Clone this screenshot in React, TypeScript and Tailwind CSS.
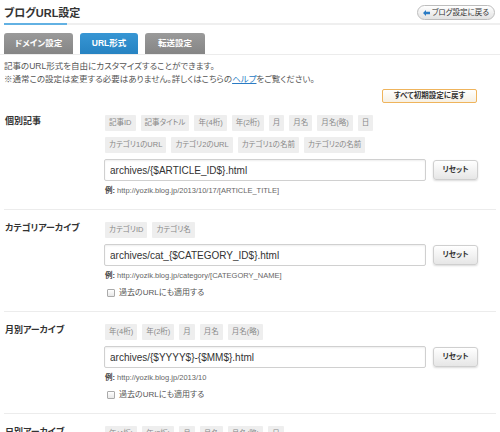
import React from "react"

const sections = [
  {
    label: "個別記事",
    rows: [
      ["記事ID", "記事タイトル", "年(4桁)", "年(2桁)", "月", "月名", "月名(略)", "日"],
      ["カテゴリ1のURL", "カテゴリ2のURL", "カテゴリ1の名前", "カテゴリ2の名前"],
    ],
    value: "archives/{$ARTICLE_ID$}.html",
    example: "http://yozik.blog.jp/2013/10/17/[ARTICLE_TITLE]",
    past: false,
  },
  {
    label: "カテゴリアーカイブ",
    rows: [["カテゴリID", "カテゴリ名"]],
    value: "archives/cat_{$CATEGORY_ID$}.html",
    example: "http://yozik.blog.jp/category/[CATEGORY_NAME]",
    past: true,
  },
  {
    label: "月別アーカイブ",
    rows: [["年(4桁)", "年(2桁)", "月", "月名", "月名(略)"]],
    value: "archives/{$YYYY$}-{$MM$}.html",
    example: "http://yozik.blog.jp/2013/10",
    past: true,
  },
  {
    label: "日別アーカイブ",
    rows: [["年(4桁)", "年(2桁)", "月", "月名", "月名(略)", "日"]],
    value: "archives/{$YYYY$}-{$MM$}-{$DD$}.html",
    example: "http://yozik.blog.jp/2013/10/17",
    past: true,
  },
]

function Section({ s }: { s: (typeof sections)[number] }) {
  return (
    <div className="flex pt-[12px] pb-[12px] border-b border-[#ececec]">
      <div className="w-[100px] shrink-0 pl-[1px] text-[9px] leading-[12px] font-bold text-[#333]">
        {s.label}
      </div>
      <div className="flex flex-col">
        <div className="flex flex-col gap-y-[6px]">
          {s.rows.map((row, i) => (
            <div key={i} className="flex gap-x-[5px] ml-[1px]">
              {row.map((c) => (
                <span
                  key={c}
                  className="h-[16px] px-[4px] flex items-center bg-[#eeeeee] rounded-[1px] text-[7.5px] text-[#888]"
                >
                  {c}
                </span>
              ))}
            </div>
          ))}
        </div>
        <div className="flex items-center mt-[6px]">
          <input
            readOnly
            defaultValue={s.value}
            className="w-[322px] h-[22px] border border-[#d0d0d0] rounded-[2px] px-[5px] text-[10px] text-[#333] bg-white shadow-[inset_0_1px_2px_rgba(0,0,0,0.07)] outline-none"
          />
          <button className="ml-[7px] w-[45px] h-[20px] border border-[#cfcfcf] rounded-[3px] bg-gradient-to-b from-white to-[#e6e6e6] shadow-[0_1px_2px_rgba(0,0,0,0.15)] text-[7.5px] font-bold text-[#333]">
            リセット
          </button>
        </div>
        <div className="mt-[4px] leading-[12px] text-[7.5px] text-[#666] ml-[1px]">
          <span className="font-bold text-[#444]">例:</span> {s.example}
        </div>
        {s.past && (
          <div className="mt-[5px] h-[12px] flex items-center ml-[3px] text-[8px] text-[#555]">
            <span className="w-[8px] h-[8px] border border-[#aaa] bg-gradient-to-b from-white to-[#e8e8e8] rounded-[1px]" />
            <span className="ml-[4px]">過去のURLにも適用する</span>
          </div>
        )}
      </div>
    </div>
  )
}

export default function App() {
  return (
    <div className="w-[500px] h-[432px] overflow-hidden bg-white text-[#333] font-['Liberation_Sans','Noto_Sans_CJK_JP',sans-serif] [font-feature-settings:'palt']">
      <div className="flex justify-between h-[23px] pl-[4px] pr-[5px]">
        <h1 className="pt-[5px] text-[11px] leading-[16px] font-bold text-[#333]">ブログURL設定</h1>
        <button className="mt-[5px] h-[15px] px-[5px] flex items-center gap-[2px] rounded-full border border-[#bdbdbd] bg-gradient-to-b from-white to-[#e2e2e2] text-[7.5px] text-[#333]">
          <svg width="7" height="6" viewBox="0 0 7 6">
            <path d="M0 3 L3 0 L3 1.8 L7 1.8 L7 4.2 L3 4.2 L3 6 Z" fill="#2a7bc4" />
          </svg>
          ブログ設定に戻る
        </button>
      </div>
      <div className="flex pl-[4px] h-[2px]">
        <div className="w-[63px] bg-[#62b1e3]" />
        <div className="flex-1 bg-[#efefef]" />
      </div>
      <div className="mt-[8px] flex gap-x-[7px] pl-[4px] border-b border-[#ececec]">
        <div className="w-[69px] h-[21px] flex items-center justify-center rounded-t-[3px] bg-gradient-to-b from-[#9a9a9a] to-[#858585] text-white text-[8.5px] font-bold">
          ドメイン設定
        </div>
        <div className="w-[58px] h-[21px] flex items-center justify-center rounded-t-[3px] bg-gradient-to-b from-[#3796d4] to-[#2683c2] text-white text-[8.5px] font-bold">
          URL形式
        </div>
        <div className="w-[60px] h-[21px] flex items-center justify-center rounded-t-[3px] bg-gradient-to-b from-[#9a9a9a] to-[#858585] text-white text-[8.5px] font-bold">
          転送設定
        </div>
      </div>
      <div className="mt-[5px] pl-[4px] text-[8.5px] leading-[13px] text-[#555]">
        <p>記事のURL形式を自由にカスタマイズすることができます。</p>
        <p>
          ※通常この設定は変更する必要はありません。詳しくはこちらの
          <a className="text-[#2a7bc4] underline">ヘルプ</a>
          をご覧ください。
        </p>
      </div>
      <div className="mt-[3px] flex justify-end pr-[23px]">
        <button className="w-[95px] h-[14px] border border-[#efb45c] rounded-[2px] bg-gradient-to-b from-white to-[#f6f0e4] text-[7.5px] font-bold text-[#333]">
          すべて初期設定に戻す
        </button>
      </div>
      <div className="px-[4px]">
        {sections.map((s) => (
          <Section key={s.label} s={s} />
        ))}
      </div>
    </div>
  )
}
